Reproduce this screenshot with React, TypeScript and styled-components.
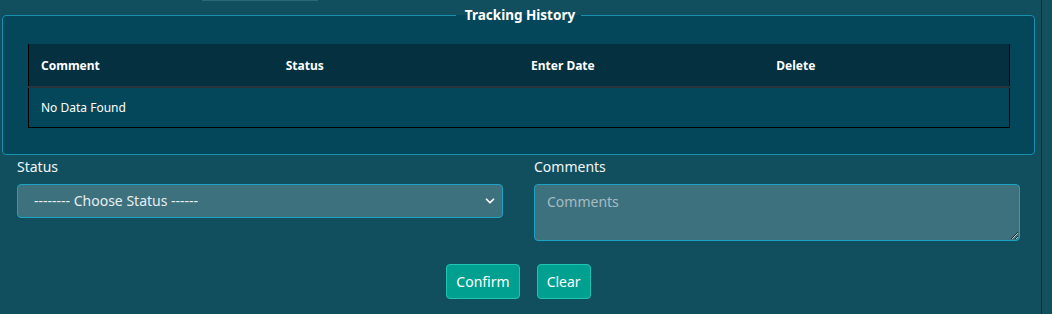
import React from "react";
import styled, { createGlobalStyle } from "styled-components";
import { ChevronDown } from "lucide-react";

const GlobalStyle = createGlobalStyle`
  html, body {
    margin: 0;
    padding: 0;
    background: #114f5f;
    font-family: "Noto Sans", "Open Sans", Arial, sans-serif;
    color: #ffffff;
  }
  * { box-sizing: border-box; }
`;

const Page = styled.div`
  display: flex;
  width: 1052px;
  height: 314px;
  overflow: hidden;
  background: #114f5f;
`;

const Main = styled.div`
  width: 1041px;
  flex: none;
  display: flex;
  flex-direction: column;
`;

const SideStrip = styled.div`
  flex: 1;
  border-left: 1px solid #0a2f3a;
  background: #134f5d;
`;

const TopLine = styled.div`
  margin-left: 202px;
  width: 116px;
  height: 1px;
  background: #2a6878;
`;

const Fieldset = styled.fieldset`
  margin: 6px 6px 0 2px;
  padding: 21px 25px 26px 25px;
  border: 1px solid #1990ad;
  border-radius: 4px;
  background: #04475a;
  min-width: 0;
`;

const Legend = styled.legend`
  margin: 0 auto;
  padding: 0 6px 0 9px;
  font-size: 13.5px;
  font-weight: 700;
  line-height: 16px;
  color: #ffffff;
`;

const Table = styled.table`
  width: 982px;
  border-collapse: collapse;
  border-left: 1px solid #000;
  border-right: 1px solid #000;
  table-layout: fixed;
`;

const HeadCell = styled.th`
  height: 43px;
  padding: 0 12px;
  text-align: left;
  font-size: 12px;
  font-weight: 700;
  color: #ffffff;
  background: #04303f;
  border-bottom: 2px solid #28363b;
`;

const BodyCell = styled.td`
  height: 40px;
  padding: 0 12px;
  font-size: 12px;
  color: #ffffff;
  background: #04475a;
  border-bottom: 1px solid #000;
`;

const FormRow = styled.div`
  display: grid;
  grid-template-columns: 486px 486px;
  column-gap: 31px;
  padding: 1px 0 0 17px;
`;

const Field = styled.div`
  display: flex;
  flex-direction: column;
`;

const Label = styled.label`
  font-size: 14px;
  line-height: 21px;
  margin-bottom: 7px;
  color: #f2f6f7;
`;

const SelectWrap = styled.div`
  position: relative;
  height: 34px;
`;

const Select = styled.select`
  appearance: none;
  width: 100%;
  height: 34px;
  padding: 0 30px 0 16px;
  font-family: inherit;
  font-size: 14px;
  color: #e6eef0;
  background: #3e717e;
  border: 1px solid #1ca3c3;
  border-radius: 4px;
  outline: none;
`;

const Chevron = styled.span`
  position: absolute;
  right: 6px;
  top: 10px;
  display: flex;
  color: #ffffff;
  pointer-events: none;
`;

const TextArea = styled.textarea`
  height: 57px;
  width: 100%;
  padding: 7px 12px;
  font-family: inherit;
  font-size: 14px;
  color: #e6eef0;
  background: #3e717e;
  border: 1px solid #1ca3c3;
  border-radius: 4px;
  resize: vertical;
  outline: none;
  &::placeholder {
    color: #a6bcc2;
  }
`;

const ButtonRow = styled.div`
  display: flex;
  justify-content: center;
  gap: 17px;
  margin-top: 23px;
  padding-right: 4px;
`;

const Button = styled.button`
  height: 35px;
  padding: 0 9px;
  font-family: inherit;
  font-size: 14px;
  color: #ffffff;
  background: #00a090;
  border: 1px solid #1ec6b1;
  border-radius: 4px;
  cursor: pointer;
`;

const columns = ["Comment", "Status", "Enter Date", "Delete"];

export default function App() {
  return (
    <>
      <GlobalStyle />
      <Page>
        <Main>
          <TopLine />
          <Fieldset>
            <Legend>Tracking History</Legend>
            <Table>
              <thead>
                <tr>
                  {columns.map((c) => (
                    <HeadCell key={c}>{c}</HeadCell>
                  ))}
                </tr>
              </thead>
              <tbody>
                <tr>
                  <BodyCell colSpan={4}>No Data Found</BodyCell>
                </tr>
              </tbody>
            </Table>
          </Fieldset>
          <FormRow>
            <Field>
              <Label>Status</Label>
              <SelectWrap>
                <Select defaultValue="">
                  <option value="">-------- Choose Status ------</option>
                </Select>
                <Chevron>
                  <ChevronDown size={14} strokeWidth={3} />
                </Chevron>
              </SelectWrap>
            </Field>
            <Field>
              <Label>Comments</Label>
              <TextArea placeholder="Comments" />
            </Field>
          </FormRow>
          <ButtonRow>
            <Button>Confirm</Button>
            <Button>Clear</Button>
          </ButtonRow>
        </Main>
        <SideStrip />
      </Page>
    </>
  );
}
